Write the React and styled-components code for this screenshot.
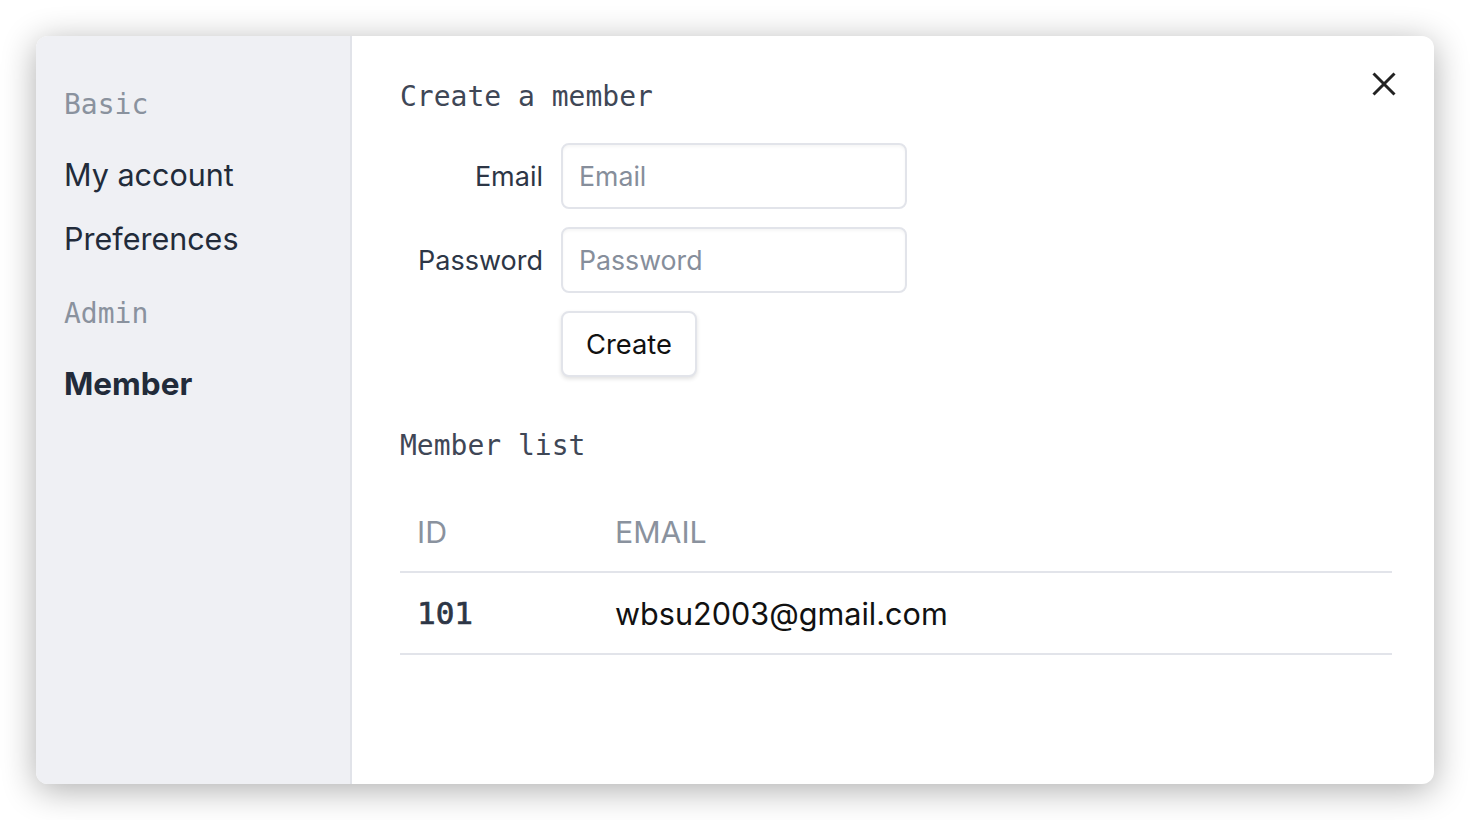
import React from 'react';
import styled, { createGlobalStyle } from 'styled-components';

const GlobalStyle = createGlobalStyle`
  body {
    margin: 0;
    background: #ffffff;
    font-family: Inter, "Noto Sans", sans-serif;
  }
`;

const Page = styled.div`
  padding: 36px;
  height: 820px;
  box-sizing: border-box;
`;

const Modal = styled.div`
  position: relative;
  display: flex;
  width: 1398px;
  height: 748px;
  background: #ffffff;
  border-radius: 12px;
  box-shadow: 0 6px 34px rgba(0, 0, 0, 0.32);
  overflow: hidden;
`;

const Sidebar = styled.nav`
  width: 316px;
  flex-shrink: 0;
  background: #eff0f4;
  border-right: 2px solid #e1e3e9;
  padding: 49px 0 0 28px;
  box-sizing: border-box;
`;

const GroupTitle = styled.div`
  font-family: "DejaVu Sans Mono", "Liberation Mono", monospace;
  font-size: 28px;
  line-height: 40px;
  color: #8a929e;
  margin-top: ${(p) => (p.first ? '0' : '23px')};
  margin-bottom: 18px;
`;

const NavItem = styled.div`
  font-size: ${(p) => (p.active ? '31.5px' : '30.5px')};
  line-height: 64px;
  color: #222b3a;
  font-weight: ${(p) => (p.active ? 700 : 400)};
`;

const Main = styled.main`
  flex: 1;
  padding: 41px 42px 0 48px;
`;

const SectionTitle = styled.h2`
  margin: 0;
  font-family: "DejaVu Sans Mono", "Liberation Mono", monospace;
  font-weight: 400;
  font-size: 28px;
  line-height: 40px;
  color: #3f4756;
`;

const Form = styled.div`
  display: grid;
  grid-template-columns: 143px 346px;
  column-gap: 18px;
  row-gap: 18px;
  margin-top: 26px;
  align-items: center;
`;

const Label = styled.label`
  text-align: right;
  font-size: 27px;
  color: #2d3646;
`;

const Input = styled.input`
  height: 66px;
  box-sizing: border-box;
  border: 2px solid #e2e4ea;
  border-radius: 8px;
  padding: 0 16px;
  font-family: Inter, sans-serif;
  font-size: 26.7px;
  color: #222;
  box-shadow: inset 0 2px 3px rgba(0, 0, 0, 0.04);
  outline: none;

  &::placeholder {
    color: #868e9b;
  }
`;

const Button = styled.button`
  grid-column: 2;
  justify-self: start;
  width: 136px;
  height: 66px;
  background: #ffffff;
  border: 2px solid #e2e4ea;
  border-radius: 8px;
  box-shadow: 0 2px 4px rgba(0, 0, 0, 0.12);
  font-family: Inter, sans-serif;
  font-size: 27.3px;
  color: #111;
`;

const ListTitle = styled(SectionTitle)`
  margin-top: 49px;
`;

const Table = styled.table`
  width: 100%;
  margin-top: 26px;
  border-collapse: collapse;
`;

const HeadCell = styled.th`
  height: 80px;
  padding: 0 17px;
  text-align: left;
  font-weight: 400;
  font-size: 30.3px;
  color: #8a929e;
  text-transform: uppercase;
  border-bottom: 2px solid #e2e4ea;
  width: ${(p) => p.width || 'auto'};
  box-sizing: border-box;
`;

const Cell = styled.td`
  height: 80px;
  padding: 0 17px;
  font-size: 30.6px;
  color: #111;
  border-bottom: 2px solid #e2e4ea;
`;

const IdCell = styled(Cell)`
  font-family: "DejaVu Sans Mono", "Liberation Mono", monospace;
  font-weight: 400;
  font-size: 31px;
  color: #2d3646;
  -webkit-text-stroke: 0.7px #2d3646;
`;

const CloseButton = styled.button`
  position: absolute;
  top: 34px;
  right: 36px;
  width: 28px;
  height: 28px;
  padding: 0;
  border: none;
  background: none;
  display: flex;
  align-items: center;
  justify-content: center;
`;

const CloseIcon = () => (
  <svg width="24" height="24" viewBox="0 0 24 24">
    <path d="M1.5 1.5 L22.5 22.5 M22.5 1.5 L1.5 22.5" stroke="#222" strokeWidth="3" fill="none" />
  </svg>
);

const members = [{ id: 101, email: 'wbsu2003@gmail.com' }];

export default function App() {
  return (
    <>
      <GlobalStyle />
      <Page>
        <Modal>
          <Sidebar>
            <GroupTitle first>Basic</GroupTitle>
            <NavItem>My account</NavItem>
            <NavItem>Preferences</NavItem>
            <GroupTitle>Admin</GroupTitle>
            <NavItem active>Member</NavItem>
          </Sidebar>
          <Main>
            <SectionTitle>Create a member</SectionTitle>
            <Form>
              <Label>Email</Label>
              <Input placeholder="Email" />
              <Label>Password</Label>
              <Input type="password" placeholder="Password" />
              <Button>Create</Button>
            </Form>
            <ListTitle>Member list</ListTitle>
            <Table>
              <thead>
                <tr>
                  <HeadCell width="198px">ID</HeadCell>
                  <HeadCell>Email</HeadCell>
                </tr>
              </thead>
              <tbody>
                {members.map((m) => (
                  <tr key={m.id}>
                    <IdCell>{m.id}</IdCell>
                    <Cell>{m.email}</Cell>
                  </tr>
                ))}
              </tbody>
            </Table>
          </Main>
          <CloseButton>
            <CloseIcon />
          </CloseButton>
        </Modal>
      </Page>
    </>
  );
}
